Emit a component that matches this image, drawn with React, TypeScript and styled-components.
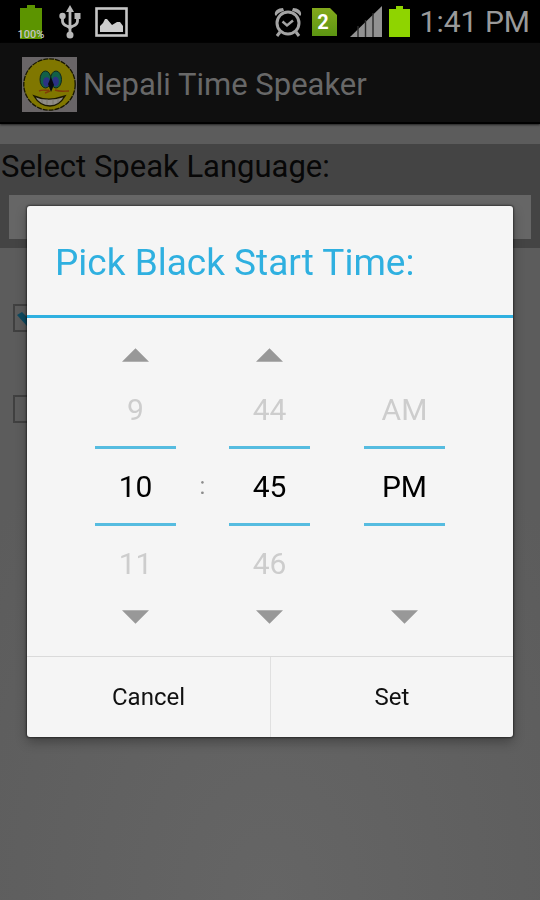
import React, { useState } from 'react';
import styled, { createGlobalStyle } from 'styled-components';

const BLUE = '#2fb0e0';

const GlobalStyle = createGlobalStyle`
  *, *::before, *::after { box-sizing: border-box; }
  html, body, #root { height: 100%; }
  body { margin: 0; background: #5c5c5c; }
  body, button, input, select { font-family: Roboto, "Liberation Sans", sans-serif; }
`;

const Screen = styled.div`
  min-height: 100%;
  display: flex;
  flex-direction: column;
  background: radial-gradient(ellipse 70% 60% at 50% 100%, #656565, #5c5c5c);
`;

const StatusBar = styled.header`
  height: 43px;
  padding: 0 10px 0 17px;
  display: flex;
  align-items: center;
  justify-content: space-between;
  background: #000;
`;

const StatusGroup = styled.div<{ $gap: number }>`
  display: flex;
  align-items: center;
  gap: ${(p) => p.$gap}px;
`;

const Clock = styled.time`
  font-size: 30px;
  line-height: 43px;
  color: #9a9a9a;
  white-space: nowrap;
`;

const ActionBar = styled.div`
  height: 81px;
  padding: 4px 22px 0;
  display: flex;
  align-items: center;
  gap: 6px;
  background: #0f0f0f;
  border-bottom: 2px solid #000;
  box-shadow: 0 1px 2px #222;
`;

const AppTitle = styled.h1`
  margin: 0;
  font-size: 31px;
  line-height: 40px;
  font-weight: 400;
  color: #686868;
`;

const Content = styled.main`
  flex: 1;
  padding-top: 20px;
`;

const LanguagePanel = styled.section`
  padding: 3px 9px 9px;
  display: flex;
  flex-direction: column;
  gap: 8px;
  background: #444;
`;

const LanguageLabel = styled.label`
  margin-left: -8px;
  font-size: 31px;
  line-height: 40px;
  color: #070707;
`;

const LanguageSelect = styled.select`
  appearance: none;
  width: 100%;
  height: 44px;
  border: 0;
  border-radius: 0;
  background: #666;
`;

const Options = styled.section`
  padding: 56px 13px 0;
  display: flex;
  flex-direction: column;
  gap: 63px;
`;

const CheckLabel = styled.label`
  position: relative;
  width: 28px;
  height: 28px;
`;

const CheckInput = styled.input`
  appearance: none;
  display: block;
  width: 28px;
  height: 28px;
  margin: 0;
  border: 2px solid #404040;
`;

const CheckMark = styled.svg`
  position: absolute;
  left: 4px;
  top: 4px;
`;

const Overlay = styled.div`
  position: fixed;
  inset: 43px 0 0;
  padding: 0 27px;
  display: flex;
  align-items: center;
  justify-content: center;
`;

const Dialog = styled.form`
  width: 100%;
  overflow: hidden;
  border-radius: 3px;
  background: #f5f5f5;
  box-shadow: 0 0 2px 1px rgba(0, 0, 0, 0.45), 0 5px 12px rgba(0, 0, 0, 0.3);
`;

const DialogTitle = styled.h2`
  margin: 0;
  padding: 33px 28px 28px;
  border-bottom: 3px solid ${BLUE};
  font-size: 37px;
  line-height: 48px;
  font-weight: 400;
  color: ${BLUE};
`;

const Pickers = styled.div`
  padding: 20px 0 22px;
  display: flex;
  align-items: center;
  justify-content: center;
`;

const Picker = styled.div`
  width: 81px;
  display: flex;
  flex-direction: column;
`;

const Separator = styled.span<{ $width: number }>`
  width: ${(p) => p.$width}px;
  text-align: center;
  font-size: 24px;
  line-height: 32px;
  color: #8c8c8c;
`;

const ArrowButton = styled.button<{ $hidden?: boolean }>`
  height: 34px;
  padding: 0;
  border: 0;
  display: flex;
  align-items: center;
  justify-content: center;
  background: none;
  visibility: ${(p) => (p.$hidden ? 'hidden' : 'visible')};
`;

const NeighbourButton = styled.button`
  height: 74px;
  padding: 0;
  border: 0;
  background: none;
  font-size: 30px;
  color: #cdcdcd;
`;

const CurrentValue = styled.input`
  width: 100%;
  height: 80px;
  padding: 0;
  border: solid #56bce0;
  border-width: 3px 0;
  border-radius: 0;
  background: none;
  outline: none;
  text-align: center;
  font-size: 30px;
  color: #000;
`;

const DialogButtons = styled.div`
  display: grid;
  grid-template-columns: 1fr 1fr;
  border-top: 1px solid #dadada;
`;

const DialogButton = styled.button`
  height: 80px;
  padding: 0;
  border: 0;
  background: none;
  font-size: 24px;
  color: #111;

  & + & {
    border-left: 1px solid #e0e0e0;
  }
`;

const BatteryFullIcon = () => (
  <svg width="28" height="36" viewBox="0 0 28 36" aria-label="Battery 100%">
    <path d="M10 1h8v3h7v31H3V4h7z" fill="#5c9400" />
    <text x="14" y="34" textAnchor="middle" fontFamily="Roboto, sans-serif" fontSize="11" fontWeight="500" fill="#c4c4c4">
      100%
    </text>
  </svg>
);

const UsbIcon = () => (
  <svg width="22" height="34" viewBox="0 0 22 34" aria-hidden="true">
    <g fill="none" stroke="#b9b9b9" strokeWidth="2.8">
      <path d="M11 4v26M3.5 12v4c0 6 7.5 4 7.5 8M18.5 12v4c0 6-7.5 4-7.5 8" />
    </g>
    <path d="M11 0l4 7H7z" fill="#b9b9b9" />
    <circle cx="3.5" cy="11" r="3.2" fill="#b9b9b9" />
    <path d="M15.500 8h6v6h-6z" fill="#b9b9b9" />
    <circle cx="11" cy="30" r="3.5" fill="#b9b9b9" />
  </svg>
);

const PictureIcon = () => (
  <svg width="33" height="30" viewBox="0 0 33 30" aria-hidden="true">
    <rect x="1.5" y="1.5" width="30" height="27" fill="none" stroke="#c6c6c6" strokeWidth="2.6" />
    <path d="M5 25v-6l3-3 2-4h2l5 6 5-3h3l3 4v6z" fill="#cdcdcd" />
  </svg>
);

const AlarmIcon = () => (
  <svg width="28" height="30" viewBox="0 0 28 30" aria-hidden="true">
    <g fill="none" stroke="#a4a4a4" strokeWidth="3">
      <circle cx="14" cy="16" r="11" />
      <path d="M8.5 14.5l4.5 4 6-5" strokeWidth="2.4" />
      <path d="M6 25l-3 4M22 25l3 4" />
    </g>
    <path d="M1 8C0 4 4 1 9 1l1 3C6 5 4 6 2 9zM27 8c1-4-3-7-8-7l-1 3c4 1 6 2 8 5z" fill="#a4a4a4" />
  </svg>
);

const SimIcon = () => (
  <svg width="25" height="28" viewBox="0 0 25 28" aria-label="SIM 2">
    <defs>
      <linearGradient id="sim" x1="0" y1="0" x2="0" y2="1">
        <stop offset="0" stopColor="#83a91c" />
        <stop offset="1" stopColor="#5c9512" />
      </linearGradient>
    </defs>
    <path d="M0 0h18l7 7v21H0z" fill="url(#sim)" />
    <text x="11" y="21" textAnchor="middle" fontFamily="Roboto, sans-serif" fontSize="20" fontWeight="700" fill="#fff">
      2
    </text>
  </svg>
);

const SignalIcon = () => (
  <svg width="35" height="31" viewBox="0 0 35 31" aria-label="Signal">
    <path d="M3 31L35 0v31z" fill="#929292" />
    <path d="M11 20v11M18.5 14v17M26 7v24" stroke="#2c2c2c" strokeWidth="1.4" />
  </svg>
);

const BatteryIcon = () => (
  <svg width="21" height="31" viewBox="0 0 21 31" aria-hidden="true">
    <path d="M7 0h7v3h7v28H0V3h7z" fill="#8fd400" />
  </svg>
);

const SmileyIcon = () => (
  <svg width="55" height="55" viewBox="0 0 55 55" aria-hidden="true">
    <rect width="55" height="55" fill="#696567" />
    <circle cx="27.5" cy="27.5" r="25.7" fill="#807700" stroke="#171600" strokeWidth="1.3" strokeDasharray="5 1" />
    <g stroke="#10261e" strokeWidth="1">
      <ellipse cx="23.5" cy="22.5" rx="5.5" ry="8.5" fill="#126047" />
      <ellipse cx="34" cy="22.5" rx="5.5" ry="8.5" fill="#126047" />
    </g>
    <ellipse cx="24.5" cy="25" rx="3.4" ry="4.8" fill="#2b3284" />
    <ellipse cx="33.5" cy="24.5" rx="3.4" ry="4.8" fill="#2b3284" />
    <path d="M29 20l-3 7 3 8 3-7z" fill="#090b10" />
    <path d="M17 34c4-2 7 0 10-1M33 33c5 2 9 1 14 1M23 36l5-2" stroke="#803c08" strokeWidth="1.4" fill="none" />
    <path d="M12 39c9 4 20 4 31 0-4 7-9 10-15 10s-12-3-16-10z" fill="#8f8c87" stroke="#1c1900" strokeWidth="1.4" />
    <path d="M20 42v4M25 42v6M31 42v6M36 41v5" stroke="#6b6960" strokeWidth=".6" fill="none" />
  </svg>
);

const Arrow = ({ down = false }: { down?: boolean }) => (
  <svg width="27" height="14" viewBox="0 0 28 14" aria-hidden="true">
    <path d={down ? 'M0 0h28L14 14z' : 'M0 14h28L14 0z'} fill="#989898" />
  </svg>
);

interface WheelProps {
  label: string;
  values: string[];
  start: number;
  wrap?: boolean;
}

function Wheel({ label, values, start, wrap = true }: WheelProps) {
  const [index, setIndex] = useState(start);
  const at = (offset: number) =>
    wrap ? values[(index + offset + values.length) % values.length] : values[index + offset];
  const move = (offset: number) => {
    if (at(offset) !== undefined) setIndex((index + offset + values.length) % values.length);
  };
  return (
    <Picker role="group" aria-label={label}>
      <ArrowButton type="button" aria-label={`Previous ${label}`} $hidden={!wrap} onClick={() => move(-1)}>
        <Arrow />
      </ArrowButton>
      <NeighbourButton type="button" onClick={() => move(-1)}>{at(-1)}</NeighbourButton>
      <CurrentValue aria-label={label} value={values[index]} readOnly />
      <NeighbourButton type="button" onClick={() => move(1)}>{at(1)}</NeighbourButton>
      <ArrowButton type="button" aria-label={`Next ${label}`} onClick={() => move(1)}>
        <Arrow down />
      </ArrowButton>
    </Picker>
  );
}

const HOURS = Array.from({ length: 12 }, (_, i) => String(i + 1));
const MINUTES = Array.from({ length: 60 }, (_, i) => String(i).padStart(2, '0'));

export default function App() {
  return (
    <Screen>
      <GlobalStyle />
      <StatusBar>
        <StatusGroup $gap={14}>
          <BatteryFullIcon />
          <UsbIcon />
          <PictureIcon />
        </StatusGroup>
        <StatusGroup $gap={10}>
          <AlarmIcon />
          <SimIcon />
          <StatusGroup $gap={7}>
            <SignalIcon />
            <BatteryIcon />
          </StatusGroup>
          <Clock>1:41 PM</Clock>
        </StatusGroup>
      </StatusBar>
      <ActionBar>
        <SmileyIcon />
        <AppTitle>Nepali Time Speaker</AppTitle>
      </ActionBar>
      <Content>
        <LanguagePanel>
          <LanguageLabel htmlFor="language">Select Speak Language:</LanguageLabel>
          <LanguageSelect id="language" />
        </LanguagePanel>
        <Options>
          <CheckLabel>
            <CheckInput type="checkbox" aria-label="First option" defaultChecked />
            <CheckMark width="20" height="18" viewBox="0 0 20 18" aria-hidden="true">
              <path d="M0 7l5-3 5 5L18 0l2 2L10 18z" fill="#0d4a60" />
            </CheckMark>
          </CheckLabel>
          <CheckLabel>
            <CheckInput type="checkbox" aria-label="Second option" />
          </CheckLabel>
        </Options>
      </Content>
      <Overlay>
        <Dialog role="dialog" aria-labelledby="dialog-title" onSubmit={(e: React.FormEvent) => e.preventDefault()}>
          <DialogTitle id="dialog-title">Pick Black Start Time:</DialogTitle>
          <Pickers>
            <Wheel label="hour" values={HOURS} start={9} />
            <Separator $width={53}>:</Separator>
            <Wheel label="minute" values={MINUTES} start={45} />
            <Separator $width={54} />
            <Wheel label="period" values={['AM', 'PM']} start={1} wrap={false} />
          </Pickers>
          <DialogButtons>
            <DialogButton type="button">Cancel</DialogButton>
            <DialogButton type="submit">Set</DialogButton>
          </DialogButtons>
        </Dialog>
      </Overlay>
    </Screen>
  );
}
